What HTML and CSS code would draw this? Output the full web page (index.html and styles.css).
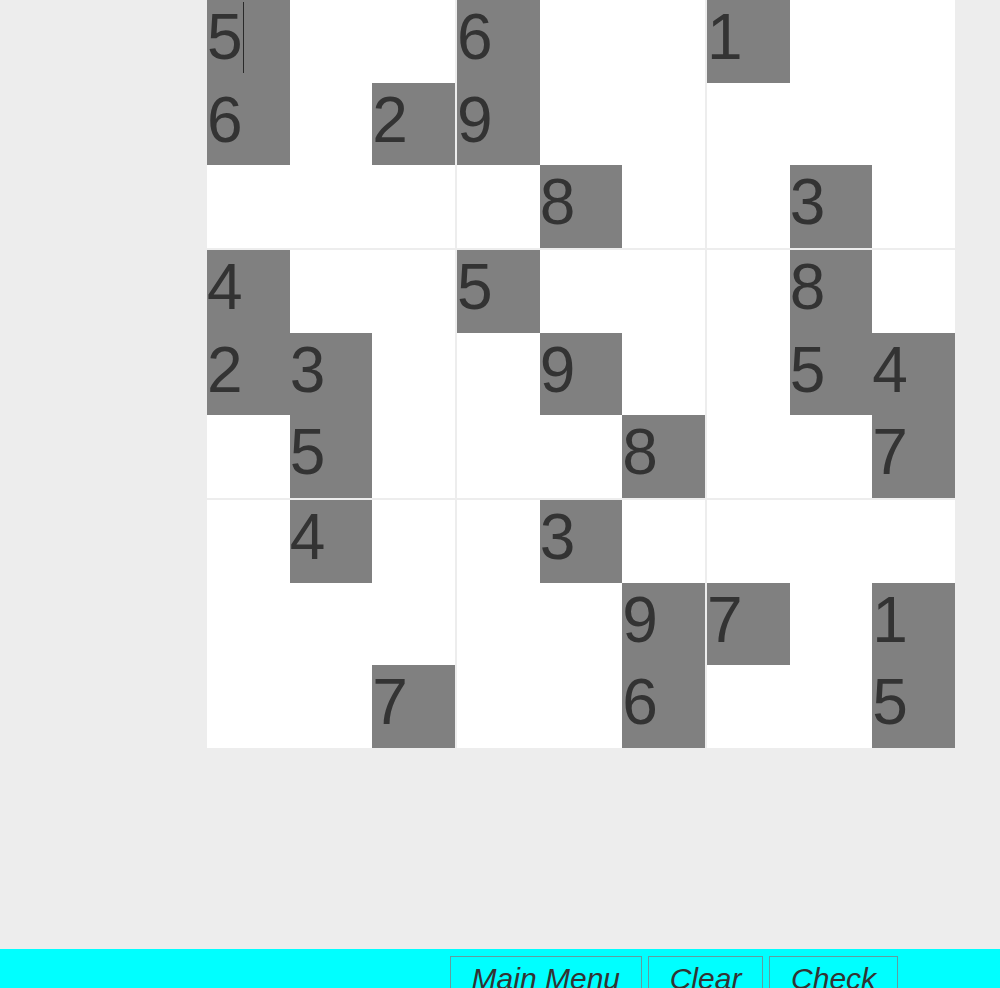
FILE: index.html
```html
<!DOCTYPE html>
<html>
<head>
<meta charset="utf-8">
<link rel="stylesheet" href="styles.css">
</head>
<body>
<div class="page">
  <div class="board">
    <div class="box">
      <div class="cell given">5<span class="caret"></span></div><div class="cell"></div><div class="cell"></div>
      <div class="cell given">6</div><div class="cell"></div><div class="cell given">2</div>
      <div class="cell"></div><div class="cell"></div><div class="cell"></div>
    </div>
    <div class="box">
      <div class="cell given">6</div><div class="cell"></div><div class="cell"></div>
      <div class="cell given">9</div><div class="cell"></div><div class="cell"></div>
      <div class="cell"></div><div class="cell given">8</div><div class="cell"></div>
    </div>
    <div class="box">
      <div class="cell given">1</div><div class="cell"></div><div class="cell"></div>
      <div class="cell"></div><div class="cell"></div><div class="cell"></div>
      <div class="cell"></div><div class="cell given">3</div><div class="cell"></div>
    </div>
    <div class="box">
      <div class="cell given">4</div><div class="cell"></div><div class="cell"></div>
      <div class="cell given">2</div><div class="cell given">3</div><div class="cell"></div>
      <div class="cell"></div><div class="cell given">5</div><div class="cell"></div>
    </div>
    <div class="box">
      <div class="cell given">5</div><div class="cell"></div><div class="cell"></div>
      <div class="cell"></div><div class="cell given">9</div><div class="cell"></div>
      <div class="cell"></div><div class="cell"></div><div class="cell given">8</div>
    </div>
    <div class="box">
      <div class="cell"></div><div class="cell given">8</div><div class="cell"></div>
      <div class="cell"></div><div class="cell given">5</div><div class="cell given">4</div>
      <div class="cell"></div><div class="cell"></div><div class="cell given">7</div>
    </div>
    <div class="box">
      <div class="cell"></div><div class="cell given">4</div><div class="cell"></div>
      <div class="cell"></div><div class="cell"></div><div class="cell"></div>
      <div class="cell"></div><div class="cell"></div><div class="cell given">7</div>
    </div>
    <div class="box">
      <div class="cell"></div><div class="cell given">3</div><div class="cell"></div>
      <div class="cell"></div><div class="cell"></div><div class="cell given">9</div>
      <div class="cell"></div><div class="cell"></div><div class="cell given">6</div>
    </div>
    <div class="box">
      <div class="cell"></div><div class="cell"></div><div class="cell"></div>
      <div class="cell given">7</div><div class="cell"></div><div class="cell given">1</div>
      <div class="cell"></div><div class="cell"></div><div class="cell given">5</div>
    </div>
  </div>
  <div class="toolbar">
    <button class="btn">Main Menu</button>
    <button class="btn">Clear</button>
    <button class="btn">Check</button>
  </div>
</div>
</body>
</html>
```

FILE: styles.css
```css
html, body {
  margin: 0;
  padding: 0;
  height: 988px;
  overflow: hidden;
  background: #ededed;
  font-family: "Liberation Sans", Arial, sans-serif;
}

.page {
  display: flex;
  flex-direction: column;
}

.board {
  margin-left: 207px;
  width: 748px;
  height: 748px;
  display: grid;
  grid-template-columns: repeat(3, 248px);
  grid-template-rows: repeat(3, 248px);
  gap: 2px;
}

.box {
  display: grid;
  grid-template-columns: repeat(3, 1fr);
  grid-template-rows: repeat(3, 1fr);
  background: #ffffff;
}

.cell {
  background: #ffffff;
  color: #333333;
  font-size: 64px;
  line-height: normal;
  padding: 0;
  overflow: hidden;
  white-space: nowrap;
}

.cell.given {
  background: #808080;
}

.caret {
  display: inline-block;
  width: 1px;
  height: 71px;
  margin-top: 2px;
  vertical-align: top;
  background: #2a2a2a;
}

.toolbar {
  margin-top: 201px;
  height: 60px;
  background: #00ffff;
  display: flex;
  align-items: flex-start;
  padding: 7px 0 0 450px;
  gap: 6.5px;
}

.btn {
  font-family: "Liberation Sans", Arial, sans-serif;
  font-style: italic;
  font-size: 30px;
  color: #333333;
  background: transparent;
  border: 1px solid #5f9ea0;
  padding: 5px 20.6px;
  margin: 0;
  line-height: normal;
}
```
